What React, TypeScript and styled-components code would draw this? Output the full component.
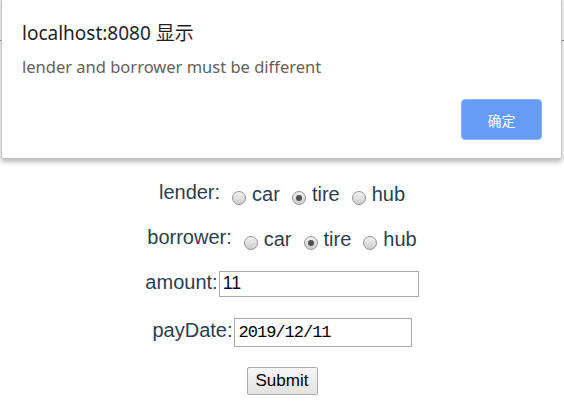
import React from "react";
import styled, { createGlobalStyle } from "styled-components";

const Global = createGlobalStyle`
  html, body { margin: 0; padding: 0; background: #fff; }
  body { width: 564px; height: 414px; overflow: hidden; position: relative; }
`;

const Page = styled.div`
  position: relative;
  width: 564px;
  height: 414px;
  font-family: "Liberation Sans", Arial, sans-serif;
  color: #2c3e50;
`;

const Header = styled.div`
  height: 40px;
  border-bottom: 1px solid #8a8a8a;
`;

const Form = styled.form`
  display: flex;
  flex-direction: column;
  align-items: center;
  padding-top: 139px;
  font-size: 20px;
`;

const Row = styled.div<{ $mt: number }>`
  display: block;
  height: 24px;
  text-align: center;
  margin-top: ${(p) => p.$mt}px;
  line-height: 24px;
  white-space: pre;
`;

const Label = styled.span<{ $raise?: number }>`
  vertical-align: ${(p) => p.$raise ?? 0}px;
`;

const Option = styled.label`
  display: inline;
`;

const Radio = styled.input.attrs({ type: "radio" })`
  appearance: none;
  width: 14px;
  height: 14px;
  margin: 0 6px 0 12px;
  border-radius: 50%;
  border: 1px solid #959595;
  background: linear-gradient(#f2f2f2, #cdcdcd);
  box-sizing: border-box;
  position: relative;
  vertical-align: -4px;
  display: inline-block;
  &:checked::after {
    content: "";
    position: absolute;
    left: 3px;
    top: 3px;
    width: 6px;
    height: 6px;
    border-radius: 50%;
    background: #505050;
  }
`;

const InlineRow = styled.div<{ $mt: number }>`
  display: flex;
  align-items: baseline;
  justify-content: center;
  margin-top: ${(p) => p.$mt}px;
  line-height: 24px;
`;

const TextInput = styled.input<{ $w: number; $h: number; $mono?: boolean }>`
  box-sizing: border-box;
  width: ${(p) => p.$w}px;
  height: ${(p) => p.$h}px;
  border: 1px solid #a9a9a9;
  margin: 0 0 0 1px;
  padding: ${(p) => (p.$mono ? "0 4px" : "0 3px")};
  font-family: ${(p) =>
    p.$mono ? '"Liberation Mono", "DejaVu Sans Mono", monospace' : '"Liberation Sans", Arial, sans-serif'};
  font-size: ${(p) => (p.$mono ? "17px" : "18px")};
  letter-spacing: ${(p) => (p.$mono ? "-1px" : "0")};
  color: ${(p) => (p.$mono ? "#000" : "#0a0a3a")};
  background: #fff;
  outline: none;
`;

const SubmitButton = styled.button`
  box-sizing: border-box;
  width: 71px;
  height: 28px;
  padding: 0;
  border: 1px solid #adadad;
  border-radius: 2px;
  background: linear-gradient(#f6f6f6, #e2e2e2);
  font-family: "Liberation Sans", Arial, sans-serif;
  font-size: 17px;
  color: #000;
`;

const Dialog = styled.div`
  position: absolute;
  left: 1px;
  top: -4px;
  width: 561px;
  height: 163px;
  box-sizing: border-box;
  background: #fff;
  border: 1px solid #c4c4c4;
  border-radius: 2px;
  box-shadow: 0 3px 5px rgba(0, 0, 0, 0.28);
  padding: 0 19px 18px 20px;
  display: flex;
  flex-direction: column;
  font-family: "Noto Sans", "Noto Sans CJK SC", sans-serif;
`;

const Title = styled.div`
  margin-top: 24px;
  font-size: 19px;
  line-height: 24px;
  color: #1f1f1f;
`;

const Message = styled.div`
  margin-top: 11px;
  font-size: 16.5px;
  line-height: 22px;
  color: #66605c;
`;

const Actions = styled.div`
  margin-top: auto;
  display: flex;
  justify-content: flex-end;
`;

const OkButton = styled.button`
  width: 81px;
  height: 41px;
  box-sizing: border-box;
  border: 1px solid #8fb5f8;
  border-radius: 4px;
  background: #669cf6;
  color: #fff;
  font-family: "Noto Sans CJK SC", sans-serif;
  font-size: 14px;
  padding: 0;
`;

export default function App() {
  const opts = ["car", "tire", "hub"];
  return (
    <Page>
      <Global />
      <Header />
      <Form onSubmit={(e) => e.preventDefault()}>
        <Row $mt={0}>
          <Label $raise={2}>lender:</Label>
          {opts.map((o) => (
            <Option key={o}>
              <Radio name="lender" defaultChecked={o === "tire"} />
              {o}
            </Option>
          ))}
        </Row>
        <Row $mt={21}>
          <Label $raise={2}>borrower:</Label>
          {opts.map((o) => (
            <Option key={o}>
              <Radio name="borrower" defaultChecked={o === "tire"} />
              {o}
            </Option>
          ))}
        </Row>
        <InlineRow $mt={21}>
          <Label>amount:</Label>
          <TextInput $w={200} $h={26} defaultValue="11" />
        </InlineRow>
        <InlineRow $mt={21}>
          <Label>payDate:</Label>
          <TextInput $w={178} $h={29} $mono defaultValue="2019/12/11" />
        </InlineRow>
        <InlineRow $mt={20}>
          <SubmitButton type="submit">Submit</SubmitButton>
        </InlineRow>
      </Form>
      <Dialog role="alertdialog">
        <Title>localhost:8080 显示</Title>
        <Message>lender and borrower must be different</Message>
        <Actions>
          <OkButton>确定</OkButton>
        </Actions>
      </Dialog>
    </Page>
  );
}
